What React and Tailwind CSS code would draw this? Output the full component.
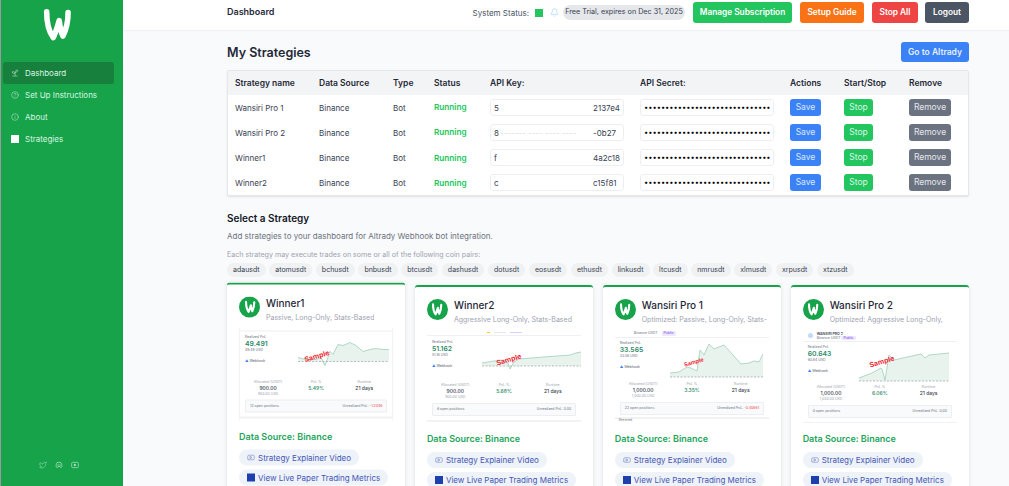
import { Bell, CircleHelp, Info, Sprout, Twitter, Youtube } from 'lucide-react'

const ROWS = [
  { name: 'Wansiri Pro 1', head: '5', tail: '2137e4' },
  { name: 'Wansiri Pro 2', head: '8', tail: '-0b27', faint: true },
  { name: 'Winner1', head: 'f', tail: '4a2c18' },
  { name: 'Winner2', head: 'c', tail: 'c15f81' },
]

const COINS = ['adausdt', 'atomusdt', 'bchusdt', 'bnbusdt', 'btcusdt', 'dashusdt', 'dotusdt', 'eosusdt', 'ethusdt', 'linkusdt', 'ltcusdt', 'nmrusdt', 'xlmusdt', 'xrpusdt', 'xtzusdt']

const CARDS = [
  {
    title: 'Winner1', sub: 'Passive, Long-Only, Stats-Based', lifted: true, top: 'none',
    pnl: '49.491', usd: '49.49 USD', alloc: '900.00', alloc2: '900.00 USD', pct: '5.49%', runtime: '21 days',
    open: '12 open positions', unreal: '-1.2046', neg: true, base: 20,
    row: 'h-[43.5px]', left: 'w-[58px]', chart: 'mt-[6.5px] h-[28px] w-[100px]', chartH: 28,
    sample: 'left-[64px] top-[17.5px] text-[7px]',
    points: [[0, 16], [8, 18], [18, 18], [23, 16], [27, 24], [32, 10], [35, 13], [40, 3], [45, 4], [52, 1], [58, 4], [65, 10], [72, 8], [78, 7], [85, 8], [91, 8]],
  },
  {
    title: 'Winner2', sub: 'Aggressive Long-Only, Stats-Based', top: 'clip',
    pnl: '51.162', usd: '51.16 USD', alloc: '900.00', alloc2: '900.00 USD', pct: '5.68%', runtime: '21 days',
    open: '6 open positions', unreal: '0.00', base: 20,
    row: 'h-[42px]', left: 'w-[55px]', chart: 'mt-[6px] h-[28px] w-[100px]', chartH: 28,
    sample: 'left-[69px] top-[16px] text-[7px]',
    points: [[0, 17], [12, 15], [22, 14], [26, 17], [28, 23], [32, 16], [37, 13], [62, 11], [88, 9], [94, 7], [99, 6]],
  },
  {
    title: 'Wansiri Pro 1', sub: 'Optimized: Passive, Long-Only, Stats-', top: 'line', footer: true,
    pnl: '33.565', usd: '33.56 USD', alloc: '1,000.00', alloc2: '1,000.00 USD', pct: '3.35%', runtime: '21 days',
    open: '22 open positions', unreal: '-0.40661', neg: true, base: 33,
    row: 'h-[39.5px]', left: 'w-[55px]', chart: 'mt-[2.5px] h-[36px] w-[100px]', chartH: 36,
    sample: 'left-[69px] top-[19px] text-[5.5px]',
    points: [[0, 29], [9, 28], [17, 23], [21, 24], [27, 27], [30, 6], [34, 11], [39, 0], [44, 5], [54, 1], [63, 11], [71, 20], [79, 19], [84, 17], [89, 18], [93, 10]],
  },
  {
    title: 'Wansiri Pro 2', sub: 'Optimized: Aggressive Long-Only,', top: 'full',
    pnl: '60.643', usd: '60.64 USD', alloc: '1,000.00', alloc2: '1,000.00 USD', pct: '6.06%', runtime: '21 days',
    open: '0 open positions', unreal: '0.00', base: 30,
    row: 'h-[39px]', left: 'w-[56px]', chart: 'mt-[6px] h-[31px] w-[100px]', chartH: 31,
    sample: 'left-[66px] top-[13px] text-[7px]',
    points: [[0, 27], [13, 22], [22, 17], [23, 18], [26, 29], [30, 4], [35, 9], [62, 3], [66, 7], [70, 4], [90, 2]],
  },
]

function Logo({ className }) {
  return (
    <svg viewBox="0 0 40 46" className={className} fill="none" stroke="#fff" strokeLinecap="round" strokeLinejoin="round">
      <path d="M6 5 C6 18 9 32 15 40 C18 34 21 24 23 17 C24 25 26 34 28 38 C32 30 35 16 35 6" strokeWidth="7.5" />
    </svg>
  )
}

function SquareSwatch({ className }) {
  return <span className={`block shrink-0 ${className}`} />
}

function NavItem({ icon, label, active }) {
  return (
    <div className={`flex h-[22px] items-center gap-[6px] rounded-[3px] pl-2 text-[8px] text-[#d7f5e1] ${active ? 'bg-[#17803d]' : ''}`}>
      {icon}
      <span>{label}</span>
    </div>
  )
}

function Sidebar() {
  return (
    <aside className="flex h-full w-[123px] shrink-0 flex-col border-l border-[#9a9a9a] bg-[#16a34a]">
      <div className="flex h-[62px] items-start justify-center pr-[10px] pt-[8px]">
        <Logo className="h-[34px] w-[30px]" />
      </div>
      <nav className="flex flex-col pl-[2px] pr-[9px]">
        <NavItem active label="Dashboard" icon={<Sprout size={8} strokeWidth={1.4} className="shrink-0" />} />
        <NavItem label="Set Up Instructions" icon={<CircleHelp size={8} strokeWidth={1.4} className="shrink-0" />} />
        <NavItem label="About" icon={<Info size={8} strokeWidth={1.4} className="shrink-0" />} />
        <NavItem label="Strategies" icon={<SquareSwatch className="h-2 w-2 bg-white" />} />
      </nav>
      <div className="mt-auto flex items-center justify-center gap-[8px] pb-[17px] pr-[7px] text-[#b9e8c9]">
        <Twitter size={8} strokeWidth={1.4} />
        <svg viewBox="0 0 24 24" className="h-2 w-2" fill="none" stroke="currentColor" strokeWidth="2">
          <path d="M6 5c4-1.500 8-1.500 12 0 2 3.500 3 8 3 12-1.500 1.500-3 2-4.500 2l-1.500-2.500c-2 .5-4 .5-6 0L7.500 19C6 19 4.500 18.500 3 17c0-4 1-8.500 3-12z" />
          <circle cx="9" cy="12" r="1" />
          <circle cx="15" cy="12" r="1" />
        </svg>
        <svg viewBox="0 0 24 24" className="h-2 w-2" fill="none" stroke="currentColor" strokeWidth="2">
          <rect x="2" y="4" width="20" height="16" rx="3" />
          <path d="M10 9l5 3-5 3z" fill="currentColor" />
        </svg>
      </div>
    </aside>
  )
}

function Header() {
  return (
    <header className="flex h-[30px] shrink-0 items-start justify-between bg-white pl-[104px] pr-10 shadow-[0_1px_1px_rgba(0,0,0,0.03)]">
      <h1 className="pt-[5px] text-[9px] font-semibold leading-[14px] text-[#1f2937]">Dashboard</h1>
      <div className="flex items-center pt-[2px]">
        <span className="text-[8px] text-[#4b5563]">System Status:</span>
        <SquareSwatch className="ml-[6px] h-2 w-2 bg-[#22c55e]" />
        <Bell size={9} strokeWidth={1.4} className="ml-[7px] text-[#93c5fd]" />
        <span className="ml-[4px] flex h-[15px] w-[122px] items-center justify-center whitespace-nowrap rounded-full bg-[#e5e7eb] text-[7.2px] text-[#374151]">Free Trial, expires on Dec 31, 2025</span>
        <button className="ml-[8px] h-[21px] w-[99px] rounded-[3px] bg-[#22c55e] text-[8.3px] font-semibold text-white">Manage Subscription</button>
        <button className="ml-[8px] h-[21px] w-[64px] rounded-[3px] bg-[#f97316] text-[8.3px] font-semibold text-white">Setup Guide</button>
        <button className="ml-[8px] h-[21px] w-[46px] rounded-[3px] bg-[#ef4444] text-[8.3px] font-semibold text-white">Stop All</button>
        <button className="ml-[7px] h-[21px] w-[44px] rounded-[3px] bg-[#4b5563] text-[8.3px] font-semibold text-white">Logout</button>
      </div>
    </header>
  )
}

function KeyField({ row }) {
  return (
    <div className="flex h-[17px] w-[134px] items-center justify-between overflow-hidden rounded-[3px] border border-[#eceef1] bg-white pl-[3px] text-[8px] text-[#374151]">
      <span>{row.head}</span>
      {row.faint && <span className="ml-[1px] flex-1 truncate text-[8px] text-[#d9dde3]">------- ---- ---- ----</span>}
      <span className="w-[30px] whitespace-nowrap">{row.tail}</span>
    </div>
  )
}

function StrategyTable() {
  const th = 'px-0 text-left text-[8.5px] font-semibold text-[#1f2937]'
  const td = 'text-[8px] text-[#374151]'
  return (
    <div className="overflow-hidden rounded-[2px] border border-[#e5e7eb] bg-white shadow-[0_1px_2px_rgba(0,0,0,0.1)]">
      <table className="w-full table-fixed border-collapse">
        <colgroup>
          <col className="w-[91px]" />
          <col className="w-[74px]" />
          <col className="w-[41px]" />
          <col className="w-[56px]" />
          <col className="w-[150px]" />
          <col className="w-[150px]" />
          <col className="w-[54px]" />
          <col className="w-[65px]" />
          <col />
        </colgroup>
        <thead>
          <tr className="h-[24px] bg-[#f3f4f6]">
            <th className={`${th} pl-[7px]`}>Strategy name</th>
            <th className={th}>Data Source</th>
            <th className={th}>Type</th>
            <th className={th}>Status</th>
            <th className={th}>API Key:</th>
            <th className={th}>API Secret:</th>
            <th className={th}>Actions</th>
            <th className={th}>Start/Stop</th>
            <th className={th}>Remove</th>
          </tr>
        </thead>
        <tbody>
          {ROWS.map(row => (
            <tr key={row.name} className="h-[25.1px]">
              <td className={`${td} pl-[7px]`}>{row.name}</td>
              <td className={td}>Binance</td>
              <td className={td}>Bot</td>
              <td className="text-[8.2px] font-semibold text-[#22c55e]">Running</td>
              <td><KeyField row={row} /></td>
              <td>
                <div className="flex h-[17px] w-[134px] items-center whitespace-nowrap rounded-[3px] border border-[#eceef1] bg-white pl-[3px] text-[7.5px] leading-none text-black">
                  ••••••••••••••••••••••••••••••
                </div>
              </td>
              <td><button className="block h-[17px] w-[31px] rounded-[3px] bg-[#3b82f6] text-[8.5px] text-[#dbe8fd]">Save</button></td>
              <td><button className="block h-[17px] w-[29px] rounded-[3px] bg-[#22c55e] text-[8.5px] text-[#dcf7e6]">Stop</button></td>
              <td><button className="block h-[17px] w-[42px] rounded-[3px] bg-[#6b7280] text-[8.5px] text-[#e5e7eb]">Remove</button></td>
            </tr>
          ))}
        </tbody>
      </table>
    </div>
  )
}

function Sparkline({ card }) {
  const line = card.points.map(p => p.join(',')).join(' ')
  const last = card.points[card.points.length - 1][0]
  return (
    <svg viewBox={`0 0 100 ${card.chartH}`} className={`shrink-0 ${card.chart}`} fill="none">
      <polygon points={`0,${card.base} ${line} ${last},${card.base}`} fill="#e8f3ee" />
      <polyline points={line} stroke="#9fcfb8" strokeWidth="0.8" />
      <line x1="0" x2={last} y1={card.base} y2={card.base} stroke="#9aa5a0" strokeWidth="0.7" strokeDasharray="2 1.500" />
    </svg>
  )
}

function Preview({ card }) {
  return (
    <div className={`flex h-[92px] flex-col overflow-hidden ${card.top === 'none' ? 'border-x border-[#f1f2f4]' : ''}`}>
      {card.top === 'none' && <div className="mb-[3.5px] mt-[2px] shrink-0 border-t border-[#eef0f3]" />}
      {card.top === 'clip' && (
        <div className="mb-[4px] flex h-[5px] shrink-0 items-start justify-center gap-1 border-b border-[#eef0f3]">
          <span className="mt-[1px] h-[1px] w-[3px] bg-[#facc15]" />
          <span className="mt-[1px] h-[1px] w-[12px] bg-[#e5e7eb]" />
          <span className="mt-[1px] h-[1px] w-[12px] bg-[#d8cdfb]" />
        </div>
      )}
      {card.top === 'line' && (
        <div className="mb-[3.5px] flex h-[7px] shrink-0 items-start gap-1 border-b border-[#eef0f3] pl-[19px] text-[3.5px] leading-[5px] text-[#6b7280]">
          <span>Binance USDT</span>
          <span className="rounded-[1px] bg-[#ede9fe] px-[2px] text-[#7c3aed]">Public</span>
        </div>
      )}
      {card.top === 'full' && (
        <div className="mb-[3px] flex h-[11px] shrink-0 items-center gap-[4px] border-b border-[#eef0f3] pl-[5px] text-[3.5px] leading-[4px] text-[#6b7280]">
          <span className="h-[5px] w-[5px] rounded-full bg-[#bfdbfe]" />
          <div>
            <div className="font-semibold text-[#374151]">WANSIRI PRO 2</div>
            <div>
              Binance USDT <span className="rounded-[1px] bg-[#ede9fe] px-[2px] text-[#7c3aed]">Public</span>
            </div>
          </div>
        </div>
      )}
      <div className={`relative flex shrink-0 ${card.row}`}>
        <div className={`flex shrink-0 flex-col pl-[5px] ${card.left}`}>
          <span className="text-[3.5px] leading-[5px] text-[#6b7280]">Realized PnL</span>
          <span className="text-[6.8px] font-semibold leading-[8px] text-[#2c8a68]">{card.pnl}</span>
          <span className="text-[3.5px] leading-[5px] text-[#6b7280]">{card.usd}</span>
          <span className="mt-[6px] text-[3.5px] leading-[5px] text-[#4b5563]">
            <span className="text-[#3b82f6]">▲</span> Webhook
          </span>
        </div>
        <Sparkline card={card} />
        <span className={`absolute ${card.sample} -rotate-[16deg] font-bold leading-none text-[#ef2b36]`}>Sample</span>
      </div>
      <div className="mx-1 grid shrink-0 grid-cols-3 text-center text-[3.5px] text-[#9ca3af]">
        <div className="flex flex-col">
          <span className="leading-[6px]">Allocated (USDT)</span>
          <span className="text-[5px] font-medium leading-[7px] text-[#374151]">{card.alloc}</span>
          <span className="leading-[5px]">{card.alloc2}</span>
        </div>
        <div className="flex flex-col">
          <span className="leading-[6px]">PnL %</span>
          <span className="text-[5px] font-medium leading-[7px] text-[#2c8a68]">{card.pct}</span>
        </div>
        <div className="flex flex-col">
          <span className="leading-[6px]">Runtime</span>
          <span className="text-[5px] font-medium leading-[7px] text-[#374151]">{card.runtime}</span>
        </div>
      </div>
      <div className="mx-[5px] mt-[3px] flex h-[13px] shrink-0 items-center justify-between rounded-[1px] border border-[#eceef1] bg-[#f9fafb] px-[4px] text-[3.5px] text-[#6b7280]">
        <span>{card.open}</span>
        <span>
          Unrealized PnL: <span className={card.neg ? 'text-[#ef4444]' : ''}>{card.unreal}</span>
        </span>
      </div>
      <div className={`shrink-0 border-t-2 border-[#f1f2f4] ${card.footer ? 'mt-[2px]' : 'mt-[4px]'}`} />
      {card.footer && <div className="shrink-0 pl-[4px] pt-[0.5px] text-[3px] leading-[3px] text-[#6b7280]">Retrieved</div>}
    </div>
  )
}

function StrategyCard({ card }) {
  return (
    <div className={`h-[220px] rounded-t-[3px] border-t-[2.5px] border-[#16a34a] bg-white px-3 pt-[12px] shadow-[0_1px_4px_rgba(0,0,0,0.12)] ${card.lifted ? '-translate-y-[2.5px]' : ''}`}>
      <div className="flex h-[31.5px] items-start gap-[6px] overflow-hidden">
        <div className="flex h-[21px] w-[21px] shrink-0 items-center justify-center rounded-full bg-[#16a34a]">
          <Logo className="h-[13px] w-[12px]" />
        </div>
        <div className="min-w-0 whitespace-nowrap">
          <div className="text-[10px] font-medium leading-[13px] text-[#1f2937]">{card.title}</div>
          <div className="mt-[2px] overflow-hidden text-[7px] leading-[11px] text-[#9ca3af]">{card.sub}</div>
        </div>
      </div>
      <Preview card={card} />
      <div className="mt-[9px] whitespace-nowrap text-[9px] font-semibold leading-[13px] text-[#22a55a]">Data Source: Binance</div>
      <div className="mt-[7px] flex w-fit items-center gap-[3px] whitespace-nowrap rounded-full bg-[#eef2f9] py-[2px] pl-2 pr-2 text-[8px] leading-[12px] text-[#4557b5]">
        <Youtube size={8} strokeWidth={1.5} className="text-[#6272b8]" />
        Strategy Explainer Video
      </div>
      <div className="mt-1 flex w-fit items-center gap-[3px] whitespace-nowrap rounded-full bg-[#eef2f9] py-[2px] pl-2 pr-2 text-[8px] leading-[12px] text-[#4557b5]">
        <SquareSwatch className="h-2 w-2 bg-[#1e40af]" />
        View Live Paper Trading Metrics
      </div>
    </div>
  )
}

export default function App() {
  return (
    <div className="flex h-[486px] w-full overflow-hidden bg-[#f9fafb] font-['Inter',sans-serif]">
      <Sidebar />
      <div className="flex min-w-0 flex-1 flex-col">
        <Header />
        <main className="pl-[104px] pr-10">
          <div className="flex h-[40px] items-start justify-between pt-[12px]">
            <h2 className="pt-[2px] text-[12.5px] font-semibold leading-[18px] text-[#1f2937]">My Strategies</h2>
            <button className="h-5 w-[68px] rounded-[3px] bg-[#3b82f6] text-[8.5px] font-semibold text-[#e5eefe]">Go to Altrady</button>
          </div>
          <StrategyTable />
          <section className="mt-[15px]">
            <h3 className="text-[10px] font-semibold leading-[14px] text-[#111827]">Select a Strategy</h3>
            <p className="mt-[5px] text-[8px] leading-[12px] text-[#6b7280]">Add strategies to your dashboard for Altrady Webhook bot integration.</p>
            <p className="mt-[8px] text-[7.1px] leading-[10px] text-[#9ca3af]">Each strategy may execute trades on some or all of the following coin pairs:</p>
            <div className="mt-[3px] flex gap-[3.6px]">
              {COINS.map(c => (
                <span key={c} className="flex h-[14px] items-center rounded-full bg-[#f0f1f3] px-[6px] text-[7px] text-[#374151]">{c}</span>
              ))}
            </div>
            <div className="mt-[8px] grid grid-cols-4 gap-[9.5px]">
              {CARDS.map(card => <StrategyCard key={card.title} card={card} />)}
            </div>
          </section>
        </main>
      </div>
    </div>
  )
}
